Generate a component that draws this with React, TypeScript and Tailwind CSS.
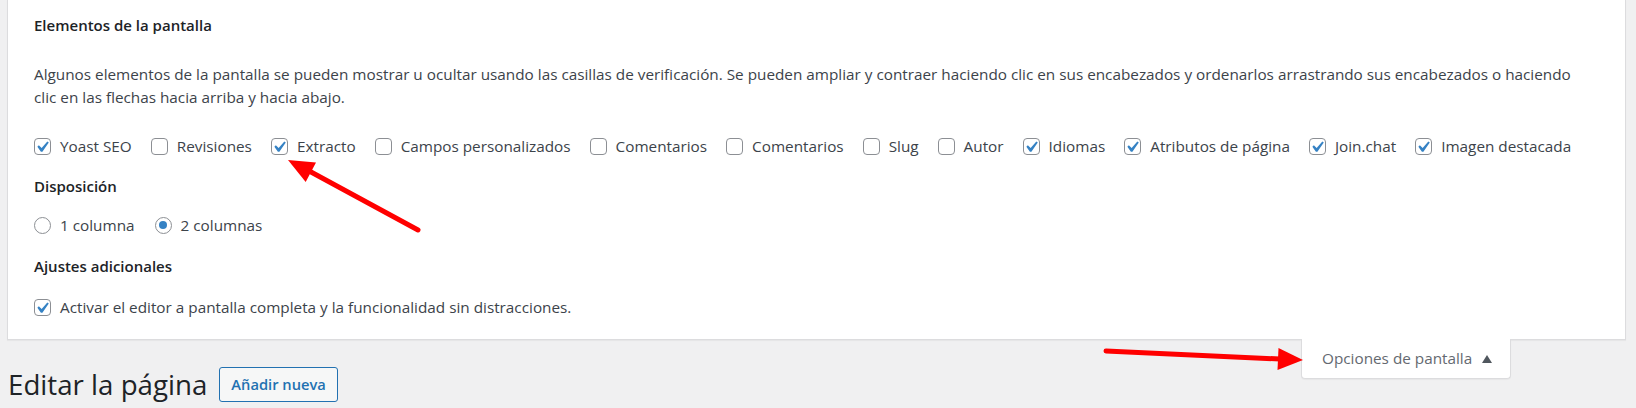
import React from 'react';

const items: { label: string; checked: boolean }[] = [
  { label: 'Yoast SEO', checked: true },
  { label: 'Revisiones', checked: false },
  { label: 'Extracto', checked: true },
  { label: 'Campos personalizados', checked: false },
  { label: 'Comentarios', checked: false },
  { label: 'Comentarios', checked: false },
  { label: 'Slug', checked: false },
  { label: 'Autor', checked: false },
  { label: 'Idiomas', checked: true },
  { label: 'Atributos de página', checked: true },
  { label: 'Join.chat', checked: true },
  { label: 'Imagen destacada', checked: true },
];

const Checkbox: React.FC<{ checked: boolean }> = ({ checked }) => (
  <span className="relative block w-[17px] h-[17px] shrink-0 rounded-[4px] border border-[#8c8f94] bg-white">
    {checked && (
      <svg viewBox="0 0 20 20" className="absolute -left-[4px] -top-[3px] w-[22px] h-[22px]">
        <path d="M14.83 4.89l1.34.94-5.81 8.38H9.02L5.78 9.67l1.34-1.25 2.57 2.4z" fill="#3582c4" />
      </svg>
    )}
  </span>
);

const Radio: React.FC<{ checked: boolean }> = ({ checked }) => (
  <span className="flex items-center justify-center w-[17px] h-[17px] shrink-0 rounded-full border border-[#8c8f94] bg-white">
    {checked && <span className="block w-[8px] h-[8px] rounded-full bg-[#3582c4]" />}
  </span>
);

export default function App() {
  return (
    <div className="relative w-full h-[408px] overflow-hidden bg-[#f0f0f1] font-['Open_Sans',sans-serif] text-[#3c434a]">
      {/* panel de opciones */}
      <div className="ml-[7px] mr-[10px] bg-white border border-t-0 border-[#dcdcde] shadow-[0_1px_1px_rgba(0,0,0,0.04)] pl-[26px] pr-[20px] pt-[15px] pb-[20px]">
        <div className="text-[15px] leading-[20px] font-semibold text-[#1d2327]">Elementos de la pantalla</div>
        <p className="mt-[28px] text-[15.3px] leading-[23px]">
          Algunos elementos de la pantalla se pueden mostrar u ocultar usando las casillas de verificación. Se pueden ampliar y contraer haciendo clic en sus encabezados y ordenarlos arrastrando sus encabezados o haciendo
          <br />
          clic en las flechas hacia arriba y hacia abajo.
        </p>
        <div className="mt-[25px] flex items-center h-[24px] gap-[19px] text-[15.3px]">
          {items.map((it, i) => (
            <label key={i} className="flex items-center gap-[9px] whitespace-nowrap">
              <Checkbox checked={it.checked} />
              <span>{it.label}</span>
            </label>
          ))}
        </div>
        <div className="mt-[18px] text-[15px] leading-[20px] font-semibold text-[#1d2327]">Disposición</div>
        <div className="mt-[17px] flex items-center h-[24px] gap-[20px] text-[15.3px]">
          <label className="flex items-center gap-[9px]">
            <Radio checked={false} />
            <span>1 columna</span>
          </label>
          <label className="flex items-center gap-[9px]">
            <Radio checked={true} />
            <span>2 columnas</span>
          </label>
        </div>
        <div className="mt-[19px] text-[15px] leading-[20px] font-semibold text-[#1d2327]">Ajustes adicionales</div>
        <div className="mt-[19px] flex items-center h-[24px] text-[15.3px]">
          <label className="flex items-center gap-[9px]">
            <Checkbox checked={true} />
            <span>Activar el editor a pantalla completa y la funcionalidad sin distracciones.</span>
          </label>
        </div>
      </div>

      {/* título y pestaña */}
      <div className="flex items-start justify-between pr-[125px]">
        <div className="flex items-center gap-[12px] pl-[8px] mt-[27px]">
          <h1 className="text-[27.7px] leading-[35px] font-normal text-[#1d2327]">Editar la página</h1>
          <button className="h-[35px] px-[11px] rounded-[3px] border border-[#2271b1] bg-[#f6f7f7] text-[#2271b1] text-[14.7px] font-semibold">
            Añadir nueva
          </button>
        </div>
        <div className="-mt-px w-[210px] h-[40px] flex items-center pl-[20px] gap-[10px] bg-white border border-t-0 border-[#dcdcde] rounded-b-[4px] shadow-[0_1px_1px_rgba(0,0,0,0.04)] text-[15.3px] text-[#646970]">
          <span>Opciones de pantalla</span>
          <svg viewBox="0 0 10 8" className="w-[10px] h-[8px]">
            <polygon points="5,0 10,8 0,8" fill="#50575e" />
          </svg>
        </div>
      </div>

      {/* flechas rojas */}
      <svg className="absolute inset-0 w-[1636px] h-[408px] pointer-events-none" viewBox="0 0 1636 408">
        <line x1="418" y1="230" x2="311" y2="172" stroke="#ff0000" strokeWidth="5" strokeLinecap="round" />
        <polygon points="288,160 316,162.6 305.7,182" fill="#ff0000" />
        <line x1="1106" y1="351" x2="1280" y2="359" stroke="#ff0000" strokeWidth="5" strokeLinecap="round" />
        <polygon points="1303,360 1277.5,370 1278.5,348" fill="#ff0000" />
      </svg>
    </div>
  );
}
